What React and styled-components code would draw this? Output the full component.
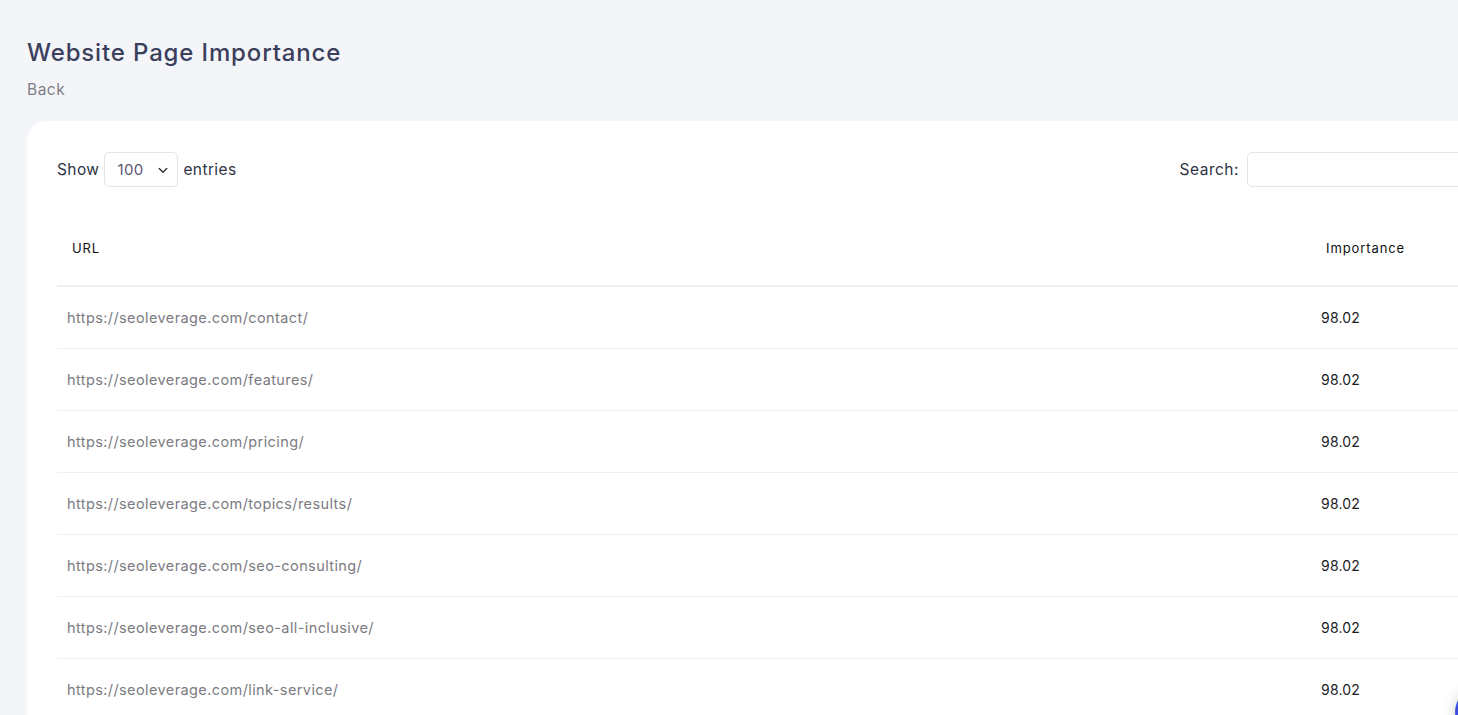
import styled, { createGlobalStyle } from 'styled-components';

const GlobalStyle = createGlobalStyle`
	html, body {
		margin: 0;
		padding: 0;
		overflow: hidden;
		background: #f4f5f9;
		font-family: Inter, "Open Sans", sans-serif;
	}
`;

const rows = [
	'https://seoleverage.com/contact/',
	'https://seoleverage.com/features/',
	'https://seoleverage.com/pricing/',
	'https://seoleverage.com/topics/results/',
	'https://seoleverage.com/seo-consulting/',
	'https://seoleverage.com/seo-all-inclusive/',
	'https://seoleverage.com/link-service/',
];

const App = () => {
	return (
		<Page>
			<GlobalStyle />
			<Title>Website Page Importance</Title>
			<BackLink>Back</BackLink>
			<Card>
				<Controls>
					<Length>
						Show
						<SelectBox>
							<span>100</span>
							<svg width="12" height="12" viewBox="0 0 16 16" fill="none">
								<path d="M3 6l5 5 5-5" stroke="#343a40" strokeWidth="2" strokeLinecap="round" strokeLinejoin="round" />
							</svg>
						</SelectBox>
						entries
					</Length>
					<SearchWrap>
						Search:
						<SearchInput type="text" />
					</SearchWrap>
				</Controls>
				<Table>
					<thead>
						<tr>
							<HeadCell>URL</HeadCell>
							<HeadCell $narrow>Importance</HeadCell>
						</tr>
					</thead>
					<tbody>
						{rows.map((url) => (
							<tr key={url}>
								<UrlCell>{url}</UrlCell>
								<ValueCell>98.02</ValueCell>
							</tr>
						))}
					</tbody>
				</Table>
			</Card>
			<ChatBubble />
		</Page>
	);
};

let Page = styled.div`
	padding: 37px 0 0 27px;
	width: 1540px;
`;
let Title = styled.h1`
	margin: 0;
	font-size: 24px;
	font-weight: 500;
	letter-spacing: 0.85px;
	color: #3b3f5c;
	line-height: 32px;
`;
let BackLink = styled.a`
	display: block;
	margin-top: 10px;
	font-size: 15.5px;
	letter-spacing: 0.5px;
	color: #7d7d85;
	line-height: 22px;
`;
let Card = styled.div`
	margin-top: 20px;
	width: 1494px;
	background: #fff;
	border-radius: 20px;
	padding: 31px 30px 0;
	box-sizing: border-box;
	height: 620px;
	overflow: hidden;
`;
let Controls = styled.div`
	display: flex;
	justify-content: space-between;
	align-items: center;
	height: 35px;
`;
let Length = styled.div`
	display: flex;
	align-items: center;
	gap: 5px;
	font-size: 15.5px;
	letter-spacing: 0.4px;
	color: #2f3443;
`;
let SelectBox = styled.div`
	width: 74px;
	height: 35px;
	box-sizing: border-box;
	border: 1px solid #e2e4ea;
	border-radius: 5px;
	display: flex;
	align-items: center;
	justify-content: space-between;
	padding: 0 8px 0 12px;
	font-size: 15px;
	color: #5c5570;
`;
let SearchWrap = styled.div`
	display: flex;
	align-items: center;
	gap: 8px;
	font-size: 15.5px;
	letter-spacing: 0.5px;
	color: #2f3443;
`;
let SearchInput = styled.input`
	width: 244px;
	height: 35px;
	box-sizing: border-box;
	border: 1px solid #e2e4ea;
	border-radius: 5px;
	outline: none;
`;
let Table = styled.table`
	margin-top: 23px;
	width: 100%;
	border-collapse: collapse;
`;
let HeadCell = styled.th`
	text-align: left;
	font-weight: 400;
	font-size: 13px;
	letter-spacing: 0.9px;
	color: #111;
	height: 75px;
	padding: 0 15px;
	border-bottom: 2px solid #eff0f5;
	width: ${(p) => (p.$narrow ? '150px' : 'auto')};
`;
let UrlCell = styled.td`
	font-size: 14.5px;
	letter-spacing: 0.4px;
	color: #7b7b82;
	height: 61px;
	padding: 0 10px;
	border-bottom: 1px solid #eff0f5;
`;
let ValueCell = styled.td`
	font-size: 14px;
	letter-spacing: 0.2px;
	color: #1b1d26;
	padding: 0 10px;
	border-bottom: 1px solid #eff0f5;
`;
let ChatBubble = styled.div`
	position: fixed;
	left: 1455px;
	top: 688px;
	width: 48px;
	height: 48px;
	border-radius: 50%;
	background: #3d4ce0;
	box-shadow: 0 0 14px rgba(0, 0, 0, 0.18);
`;

export default App;
